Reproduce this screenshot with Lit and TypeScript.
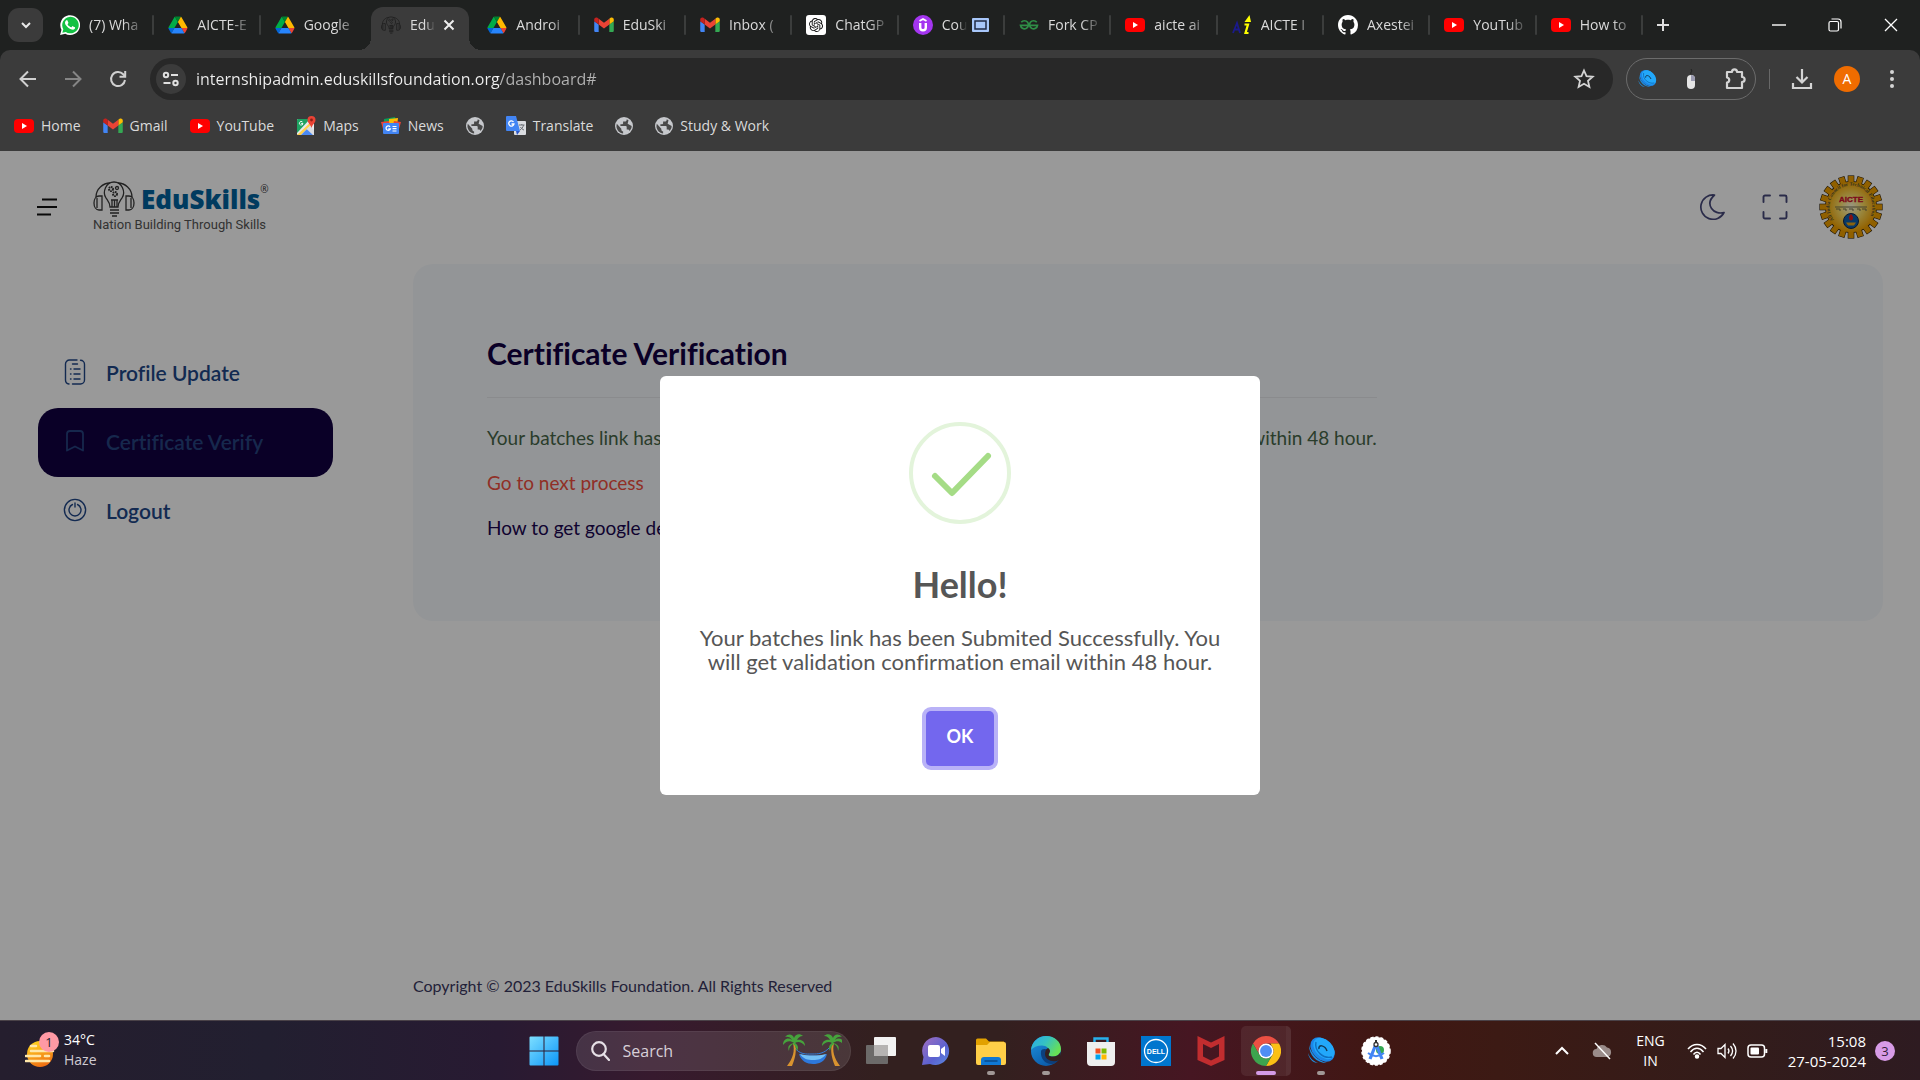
import { LitElement, html, css, svg, TemplateResult } from "lit";
import { customElement } from "lit/decorators.js";
import { classMap } from "lit/directives/class-map.js";

type Icon = TemplateResult;

/* ---------- Site icons ---------- */

const youtube: Icon = html`<svg class="ico" viewBox="0 0 20 20" aria-hidden="true">
  <rect x="0" y="3" width="20" height="14" rx="4" fill="#f00" />
  <path d="M8 7l5 3-5 3z" fill="#fff" />
</svg>`;

const gmail: Icon = html`<svg class="ico" viewBox="51 31 90 90" aria-hidden="true">
  <path fill="#4285f4" d="M58 108h14V74L52 59v43c0 3.32 2.69 6 6 6" />
  <path fill="#34a853" d="M120 108h14c3.32 0 6-2.69 6-6V59l-20 15" />
  <path fill="#fbbc04" d="M120 48v26l20-15v-8c0-7.42-8.47-11.65-14.4-7.2" />
  <path fill="#ea4335" d="M72 74V48l24 18 24-18v26L96 92" />
  <path fill="#c5221f" d="M52 51v8l20 15V48l-5.6-4.2c-5.94-4.45-14.4-.22-14.4 7.2" />
</svg>`;

const drive: Icon = html`<svg class="ico" viewBox="-2 -6 92 90" aria-hidden="true">
  <path fill="#0066da" d="m6.6 66.85 3.85 6.65c.8 1.4 1.95 2.5 3.3 3.3l13.75-23.8h-27.5c0 1.55.4 3.1 1.2 4.5z" />
  <path fill="#00ac47" d="m43.65 25-13.75-23.8c-1.35.8-2.5 1.9-3.3 3.3l-25.4 44a9.06 9.06 0 0 0-1.2 4.5h27.5z" />
  <path fill="#ea4335" d="m73.55 76.8c1.35-.8 2.5-1.9 3.3-3.3l1.6-2.75 7.65-13.25c.8-1.4 1.2-2.95 1.2-4.5h-27.502l5.852 11.5z" />
  <path fill="#00832d" d="m43.65 25 13.75-23.8c-1.35-.8-2.9-1.2-4.5-1.2h-18.5c-1.6 0-3.15.45-4.5 1.2z" />
  <path fill="#2684fc" d="m59.8 53h-32.3l-13.75 23.8c1.35.8 2.9 1.2 4.5 1.2h50.8c1.6 0 3.15-.45 4.5-1.2z" />
  <path fill="#ffba00" d="m73.4 26.5-12.7-22c-.8-1.4-1.95-2.5-3.3-3.3l-13.75 23.8 16.15 28h27.45c0-1.55-.4-3.1-1.2-4.5z" />
</svg>`;

const whatsapp: Icon = html`<svg class="ico" viewBox="0 0 24 24" aria-hidden="true">
  <path fill="#fff" d="M.1 24l1.7-6.2A11.9 11.9 0 1 1 6.3 22.400z" />
  <path fill="#12c143" d="M2.800 21.300l1.200-4.200A9.900 9.900 0 1 1 7 20.300z" />
  <path fill="#fff" d="M17.472 14.382c-.297-.149-1.758-.867-2.03-.967-.273-.099-.471-.148-.67.15-.197.297-.767.966-.94 1.164-.173.199-.347.223-.644.075-.297-.15-1.255-.463-2.39-1.475-.883-.788-1.48-1.761-1.653-2.059-.173-.297-.018-.458.13-.606.134-.133.298-.347.446-.52.149-.174.198-.298.298-.497.099-.198.05-.371-.025-.52-.075-.149-.669-1.612-.916-2.207-.242-.579-.487-.5-.669-.51-.173-.008-.371-.01-.57-.01-.198 0-.52.074-.792.372-.272.297-1.04 1.016-1.04 2.479 0 1.462 1.065 2.875 1.213 3.074.149.198 2.096 3.2 5.077 4.487.709.306 1.262.489 1.694.625.712.227 1.36.195 1.871.118.571-.085 1.758-.719 2.006-1.413.248-.694.248-1.289.173-1.413-.074-.124-.272-.198-.57-.347" />
</svg>`;

const chatgpt: Icon = html`<svg class="ico" viewBox="0 0 40 40" aria-hidden="true">
  <rect width="40" height="40" rx="6" fill="#fff" />
  <path transform="translate(6 6) scale(1.170)" fill="#111" d="M22.2819 9.8211a5.9847 5.9847 0 0 0-.5157-4.9108 6.0462 6.0462 0 0 0-6.5098-2.9A6.0651 6.0651 0 0 0 4.9807 4.1818a5.9847 5.9847 0 0 0-3.9977 2.9 6.0462 6.0462 0 0 0 .7427 7.0966 5.98 5.98 0 0 0 .511 4.9107 6.051 6.051 0 0 0 6.5146 2.9001A5.9847 5.9847 0 0 0 13.2599 24a6.0557 6.0557 0 0 0 5.7718-4.2058 5.9894 5.9894 0 0 0 3.9977-2.9001 6.0557 6.0557 0 0 0-.7475-7.0729zm-9.022 12.6081a4.4755 4.4755 0 0 1-2.8764-1.0408l.1419-.0804 4.7783-2.7582a.7948.7948 0 0 0 .3927-.6813v-6.7369l2.02 1.1686a.071.071 0 0 1 .038.052v5.5826a4.504 4.504 0 0 1-4.4945 4.4944zm-9.6607-4.1254a4.4708 4.4708 0 0 1-.5346-3.0137l.142.0852 4.783 2.7582a.7712.7712 0 0 0 .7806 0l5.8428-3.3685v2.3324a.0804.0804 0 0 1-.0332.0615L9.74 19.9502a4.4992 4.4992 0 0 1-6.1408-1.6464zM2.3408 7.8956a4.485 4.485 0 0 1 2.3655-1.9728V11.6a.7664.7664 0 0 0 .3879.6765l5.8144 3.3543-2.0201 1.1685a.0757.0757 0 0 1-.071 0l-4.8303-2.7865A4.504 4.504 0 0 1 2.3408 7.872zm16.5963 3.8558L13.1038 8.364 15.1192 7.2a.0757.0757 0 0 1 .071 0l4.8303 2.7913a4.4944 4.4944 0 0 1-.6765 8.1042v-5.6772a.79.79 0 0 0-.407-.667zm2.0107-3.0231l-.142-.0852-4.7735-2.7818a.7759.7759 0 0 0-.7854 0L9.409 9.2297V6.8974a.0662.0662 0 0 1 .0284-.0615l4.8303-2.7866a4.4992 4.4992 0 0 1 6.6802 4.66zM8.3065 12.863l-2.02-1.1638a.0804.0804 0 0 1-.038-.0567V6.0742a4.4992 4.4992 0 0 1 7.3757-3.4537l-.142.0805L8.704 5.459a.7948.7948 0 0 0-.3927.6813zm1.0976-2.3654l2.602-1.4998 2.6069 1.4998v2.9994l-2.5974 1.4997-2.6067-1.4997Z" />
</svg>`;

const udemy: Icon = html`<svg class="ico" viewBox="0 0 20 20" aria-hidden="true">
  <circle cx="10" cy="10" r="10" fill="#a435f0" />
  <path d="M6.500 6l3.500-2 3.500 2" fill="none" stroke="#fff" stroke-width="1.800" />
  <path d="M7.200 8v4.500a2.800 2.800 0 0 0 5.600 0V8" fill="none" stroke="#fff" stroke-width="2.400" />
</svg>`;

const geeks: Icon = html`<svg class="ico" viewBox="0 0 20 20" aria-hidden="true">
  <g fill="none" stroke="#2f8d46" stroke-width="1.700">
    <path d="M2.300 7.300A4 4 0 1 1 1.500 10.300H18.500A4 4 0 1 1 17.700 7.300" />
  </g>
</svg>`;

const aicteSmall: Icon = html`<svg class="ico" viewBox="0 0 20 20" aria-hidden="true">
  <path d="M1 18L5 8l3 10M2.500 14.500h4.500" fill="none" stroke="#1a1a8c" stroke-width="1.800" />
  <path d="M12.500 7L17.500 0l1.500 7z" fill="#ff0" />
  <path d="M12.500 9.500h3.500L13.500 18h3" fill="none" stroke="#ff0" stroke-width="2.200" />
</svg>`;

const github: Icon = html`<svg class="ico" viewBox="0 0 16 16" aria-hidden="true">
  <path fill="#fff" d="M8 0C3.580 0 0 3.580 0 8c0 3.540 2.290 6.530 5.470 7.590.4.070.55-.17.55-.38 0-.19-.01-.82-.01-1.490-2.010.37-2.530-.49-2.690-.94-.09-.23-.48-.94-.82-1.130-.28-.15-.68-.52-.01-.53.63-.01 1.080.58 1.230.82.72 1.210 1.870.87 2.330.66.07-.52.28-.87.51-1.070-1.780-.2-3.640-.89-3.640-3.950 0-.87.31-1.590.82-2.150-.08-.2-.36-1.020.08-2.120 0 0 .67-.21 2.200.82.64-.18 1.320-.27 2-.27s1.360.09 2 .27c1.530-1.040 2.200-.82 2.200-.82.44 1.100.16 1.920.08 2.120.51.56.82 1.270.82 2.150 0 3.070-1.870 3.750-3.650 3.950.29.25.54.73.54 1.480 0 1.070-.01 1.930-.01 2.200 0 .21.15.46.55.38A8.010 8.010 0 0 0 16 8c0-4.420-3.580-8-8-8z" />
</svg>`;

const bulbArt = svg`
  <path d="M13 17c-4-6 0-16 8-16s12 10 8 16c-2 3-4 5-4 9h-8c0-4-2-6-4-9z" />
  <path d="M3 16C3 8 10 2 17 2M39 16C39 8 32 2 25 2" />
  <path d="M6 15h3v14H6c-3 0-5-3-5-7s2-7 5-7zM36 15h-3v14h3c3 0 5-3 5-7s-2-7-5-7zM4 17v10M38 17v10" />
  <path d="M17 29h9M17 32h9M19 35h5M19 26v-7M24 26v-7M21.500 26v-7M18 19h7" />
  <circle cx="18" cy="8" r="2" stroke-width="2" stroke-dasharray="1.500 .6" />
  <circle cx="24" cy="7" r="1.500" />
  <circle cx="22" cy="13" r="2" stroke-width="2" stroke-dasharray="1.500 .6" />`;

const eduFav: Icon = html`<svg class="ico" viewBox="0 -3 42 42" fill="none" stroke="#222" stroke-width="2" aria-hidden="true">${bulbArt}</svg>`;

const globe: Icon = html`<svg class="ico globe" viewBox="2 2 20 20" aria-hidden="true">
  <circle cx="12" cy="12" r="10" fill="#c6c8cc" />
  <path fill="#3b3b3b" d="M4 9.500L9 15v1c0 1.100.9 2 2 2v2.300C7 20 3.600 16.500 3.600 12zM18 17.500c-.3-.9-1-1.500-2-1.500h-1v-3c0-.6-.4-1-1-1H8v-2h2c.6 0 1-.4 1-1V7h2c1.100 0 2-.9 2-2v-.6l2 1.200-1 4 4.500 2.400c0 2.100-.8 4-2.500 5.500z" opacity=".9" />
</svg>`;

const maps: Icon = html`<svg class="ico" viewBox="0 0 20 20" aria-hidden="true">
  <path d="M2 3h15a1 1 0 0 1 1 1v14a1 1 0 0 1-1 1H2a1 1 0 0 1-1-1V4a1 1 0 0 1 1-1z" fill="#e8eaed" />
  <path d="M1 4a1 1 0 0 1 1-1h12L1 17z" fill="#1ea362" />
  <path d="M1 19L18 3v3L5 19z" fill="#ffd04b" />
  <path d="M5 19l6.500-6.500L17.500 19z" fill="#4a89f3" />
  <path d="M10.500 13l6.500 6h1v-5l-4-4z" fill="#dadce0" />
  <path d="M15.500 0A4 4 0 0 1 19.500 4c0 3-3 4-4 8-1-4-4-5-4-8a4 4 0 0 1 4-4z" fill="#ea4335" />
  <circle cx="15.500" cy="4" r="1.400" fill="#8c1f17" />
  <path d="M6.500 6a1.800 1.800 0 1 0 .5 1.500H5.200" fill="none" stroke="#fff" stroke-width=".9" />
</svg>`;

const news: Icon = html`<svg class="ico" viewBox="0 0 20 20" aria-hidden="true">
  <path d="M3 3l11-2 2 8H3z" fill="#0c9d58" />
  <path d="M8 3l9-1-1 8H8z" fill="#fbbc04" />
  <path d="M0 6l8-1 1 8H2zM20 6l-7-1-2 8h7z" fill="#ea4335" />
  <rect x="2" y="7" width="16" height="11" rx="1" fill="#4285f4" />
  <path d="M9 10.800a2.200 2.200 0 1 0 .3 2.200H7.300" fill="none" stroke="#fff" stroke-width="1.300" />
  <path d="M11.500 10.500h4M11.500 12.700h4M11.500 15h4" stroke="#fff" stroke-width="1.200" />
</svg>`;

const translate: Icon = html`<svg class="ico" viewBox="0 0 20 20" aria-hidden="true">
  <rect x="8" y="5" width="12" height="14" rx="1" fill="#dadce0" />
  <path d="M1 0h9l4 15H1a1 1 0 0 1-1-1V1a1 1 0 0 1 1-1z" fill="#4285f4" />
  <path d="M10 15h4l-3 4z" fill="#2a56c6" />
  <path d="M7.500 6a2.600 2.600 0 1 0 .4 2H5.500" fill="none" stroke="#fff" stroke-width="1.300" />
  <path d="M13 9h5.500M15.800 8v1M17.500 9c-.5 2.500-2 4-3.500 5M14.500 11c.8 1.500 2 2.500 3.500 3" fill="none" stroke="#6b6f75" />
</svg>`;

const swirl: Icon = html`<svg class="ico" viewBox="0 0 30 30" aria-hidden="true">
  <path d="M3 9c0 10 7 18 18 18-9-2-16-9-18-18zM2 17c1 6 5 10 10 10-5-2-8-5-10-10z" fill="#1e8fe0" />
  <ellipse cx="16.500" cy="13.500" rx="14" ry="10" transform="rotate(45 16.500 13.500)" fill="#1b86e8" />
  <ellipse cx="18" cy="12.500" rx="12.500" ry="8.500" transform="rotate(45 18 12.500)" fill="#22a8fb" />
  <path d="M10 6c-2 9 7 17 16 15" fill="none" stroke="#0f6fc0" stroke-width="1.400" />
  <path d="M13 13c-1-5 6-4 8 2" fill="none" stroke="#123a58" stroke-width="1.500" />
</svg>`;

/* ---------- Browser window ---------- */

interface Tab { icon: Icon; title: string; active?: boolean; pip?: boolean }

const TABS: Tab[] = [
  { icon: whatsapp, title: "(7) Wha" },
  { icon: drive, title: "AICTE-E" },
  { icon: drive, title: "Google" },
  { icon: eduFav, title: "Edu", active: true },
  { icon: drive, title: "Androi" },
  { icon: gmail, title: "EduSki" },
  { icon: gmail, title: "Inbox (" },
  { icon: chatgpt, title: "ChatGP" },
  { icon: udemy, title: "Cou", pip: true },
  { icon: geeks, title: "Fork CP" },
  { icon: youtube, title: "aicte ai" },
  { icon: aicteSmall, title: "AICTE I" },
  { icon: github, title: "Axestei" },
  { icon: youtube, title: "YouTub" },
  { icon: youtube, title: "How to" },
];

const BOOKMARKS: { icon: Icon; label: string }[] = [
  { icon: youtube, label: "Home" },
  { icon: gmail, label: "Gmail" },
  { icon: youtube, label: "YouTube" },
  { icon: maps, label: "Maps" },
  { icon: news, label: "News" },
  { icon: globe, label: "" },
  { icon: translate, label: "Translate" },
  { icon: globe, label: "" },
  { icon: globe, label: "Study & Work" },
];

@customElement("browser-bar")
class BrowserBar extends LitElement {
  static styles = css`
    :host { display: block; background: #1f2120; color: #dadada; font: 14px/20px "Open Sans", "Noto Sans", sans-serif; }
    button { background: none; border: 0; padding: 0; margin: 0; font: inherit; color: inherit; display: grid; place-items: center; }
    a { color: inherit; text-decoration: none; }
    .ico { width: 20px; height: 20px; flex: none; display: block; }
    .strip { display: flex; height: 50px; align-items: center; }
    .search-tabs { width: 35px; height: 34px; margin: 0 5px 0 8px; border-radius: 11px; background: #3b3b3b; flex: none; }
    .tabs { flex: 1; min-width: 0; display: grid; grid-auto-flow: column; grid-auto-columns: minmax(0, 1fr); align-self: stretch; }
    .tab { position: relative; display: flex; align-items: center; padding-left: 14px; min-width: 0; }
    .tab:first-child { padding-left: 12px; }
    .open { flex: 1; min-width: 0; display: flex; gap: 9px; align-items: center; text-align: left; }
    .title { flex: 1; min-width: 0; overflow: hidden; white-space: nowrap;
      -webkit-mask-image: linear-gradient(90deg, #000 60%, transparent 100%); mask-image: linear-gradient(90deg, #000 60%, transparent 100%); }
    .sep { width: 2px; height: 20px; background: #3b3d3c; border-radius: 1px; margin-left: 6px; flex: none; }
    .tab.bare .sep { background: none; }
    .pip { margin-left: 5px; margin-right: 8px; flex: none; width: 17px; height: 14px; }
    .tab.active::before { content: ""; position: absolute; inset: 7px 4px 0 4px; background: #3b3b3b; border-radius: 12px 12px 0 0; }
    .tab.active::after { content: ""; position: absolute; bottom: 0; left: -8px; right: -8px; height: 12px;
      background: radial-gradient(circle at 0 0, transparent 12px, #3b3b3b 12px) left / 12px 12px no-repeat,
        radial-gradient(circle at 100% 0, transparent 12px, #3b3b3b 12px) right / 12px 12px no-repeat; }
    .tab.active > * { position: relative; z-index: 1; }
    .tab.active .sep { margin-left: 16px; }
    .close { width: 12px; height: 12px; margin-left: 8px; flex: none; color: #eee; }
    .window { display: flex; width: 277px; flex: none; align-items: center; }
    .new-tab { width: 40px; height: 34px; }
    .controls { margin-left: auto; display: flex; gap: 28px; padding-right: 15px; }
    .controls button { width: 28px; height: 28px; color: #fff; }
    .toolbar { background: #3b3b3b; border-radius: 10px 10px 0 0; padding: 8px 14px 0; }
    .row { display: flex; align-items: center; height: 42px; }
    .nav { display: flex; gap: 17px; margin-right: 18px; }
    .nav button { width: 28px; height: 28px; color: #d0d0d0; }
    .nav .off { color: #858585; }
    .nav svg { width: 20px; height: 20px; }
    .omnibox { flex: 1; min-width: 0; height: 42px; border-radius: 21px; background: #282828; display: flex; align-items: center; padding: 0 18px 0 6px; }
    .site { width: 30px; height: 30px; border-radius: 50%; background: #3b3b3b; flex: none; }
    .url { flex: 1; min-width: 0; border: 0; outline: 0; margin: 0 10px; padding: 0; height: 30px; font: 16px/30px "Open Sans", "Noto Sans", sans-serif;
      background: linear-gradient(90deg, #f0f0f0 304px, #b4b4b4 304px); -webkit-background-clip: text; background-clip: text; -webkit-text-fill-color: transparent; }
    .ext { display: flex; align-items: center; gap: 20px; height: 40px; border: 1px solid #6c6c6c; border-radius: 21px; padding: 0 8px; margin-left: 13px; }
    .ext button { width: 24px; height: 24px; }
    .rule { width: 1px; height: 20px; background: #686868; margin: 0 21px 0 13px; }
    .end { display: flex; align-items: center; }
    .avatar { width: 26px; height: 26px; border-radius: 50%; background: #ef6c00; color: #fff; margin: 0 28px 0 21px; }
    .more { width: 8px; height: 24px; margin-right: 10px; }
    .bookmarks { display: flex; align-items: center; height: 51px; gap: 22px; }
    .bookmarks a { display: flex; align-items: center; gap: 7px; }
    .globe { width: 18px; height: 18px; }
  `;

  render() {
    return html`
      <div class="strip">
        <button class="search-tabs" aria-label="Search tabs">
          <svg width="12" height="8" viewBox="0 0 12 8"><path d="M2 2l4 4 4-4" fill="none" stroke="#e8e8e8" stroke-width="2" /></svg>
        </button>
        <nav class="tabs" aria-label="Tabs">
          ${TABS.map((t, i) => html`
            <div class=${classMap({ tab: true, active: !!t.active, bare: i === 2 || !!t.active })}>
              <button class="open">${t.icon}<span class="title">${t.title}</span></button>
              ${t.pip ? html`<svg class="pip" viewBox="0 0 17 14"><rect width="17" height="14" rx="1" fill="#a8c7fa" /><rect x="3" y="3" width="11" height="8" fill="#a8c7fa" stroke="#1f2a44" stroke-width="1.500" /></svg>` : ""}
              ${t.active ? html`<button class="close" aria-label="Close tab"><svg width="12" height="12" viewBox="0 0 12 12"><path d="M1.500 1.500l9 9M10.500 1.500l-9 9" stroke="currentColor" stroke-width="2" /></svg></button>` : ""}
              <span class="sep"></span>
            </div>`)}
        </nav>
        <div class="window">
          <button class="new-tab" aria-label="New tab"><svg width="14" height="14" viewBox="0 0 14 14"><path d="M7 1v12M1 7h12" stroke="#dedede" stroke-width="2" /></svg></button>
          <div class="controls">
            <button aria-label="Minimize"><svg width="14" height="14" viewBox="0 0 14 14"><path d="M0 7h14" stroke="currentColor" stroke-width="1.400" /></svg></button>
            <button aria-label="Restore"><svg width="14" height="14" viewBox="0 0 14 14" fill="none" stroke="currentColor" stroke-width="1.200"><rect x="1" y="3.500" width="9.500" height="9.500" rx="1.500" /><path d="M3.500 1h6.500a3 3 0 0 1 3 3v6.500" /></svg></button>
            <button aria-label="Close"><svg width="14" height="14" viewBox="0 0 14 14"><path d="M1 1l12 12M13 1L1 13" stroke="currentColor" stroke-width="1.300" /></svg></button>
          </div>
        </div>
      </div>
      <div class="toolbar">
        <div class="row">
          <div class="nav">
            <button aria-label="Back"><svg viewBox="0 0 20 20" fill="none" stroke="currentColor" stroke-width="2"><path d="M18 10H3M10 2.500L2.500 10l7.500 7.500" /></svg></button>
            <button class="off" aria-label="Forward"><svg viewBox="0 0 20 20" fill="none" stroke="currentColor" stroke-width="2"><path d="M2 10h15M10 2.500l7.500 7.500-7.500 7.500" /></svg></button>
            <button aria-label="Reload"><svg viewBox="0 0 20 20" fill="none" stroke="currentColor" stroke-width="2"><path d="M17 11a7 7 0 1 1-1.800-5.700L17 7.200" /><path d="M17.200 2v5.700h-5.700" /></svg></button>
          </div>
          <div class="omnibox">
            <button class="site" aria-label="Site information"><svg width="18" height="16" viewBox="0 0 18 16" fill="none" stroke="#e0e0e0" stroke-width="2"><circle cx="4" cy="4" r="2.200" /><path d="M9 4h7" /><circle cx="13.500" cy="12" r="2.200" /><path d="M1.500 12h7" /></svg></button>
            <input class="url" aria-label="Address" value="internshipadmin.eduskillsfoundation.org/dashboard#" />
            <button aria-label="Bookmark this tab"><svg width="22" height="22" viewBox="0 0 22 22" fill="none" stroke="#d4d4d4" stroke-width="1.800"><path d="M11 2.500l2.500 5.700 6.200.6-4.700 4.100 1.400 6.100-5.400-3.200-5.400 3.200L7 12.900 2.300 8.800l6.200-.6z" /></svg></button>
          </div>
          <div class="ext">
            <button aria-label="Sound extension">${swirl}</button>
            <button aria-label="Mouse extension"><svg width="20" height="24" viewBox="0 0 20 24"><path d="M10 7c-1-2 2-2 0-5" stroke="#222" fill="none" /><rect x="6" y="8" width="8" height="14" rx="4" fill="#e6e6e6" /><path d="M10 8a4 4 0 0 1 4 4v2h-4z" fill="#9a9ab0" /></svg></button>
            <button aria-label="Extensions"><svg width="24" height="24" viewBox="0 0 24 24" fill="none" stroke="#d4d4d4" stroke-width="2.200" stroke-linejoin="round"><path d="M4 5h5c0-3.500 5-3.500 5 0h5v5c3.500 0 3.500 5 0 5v6H4v-5.500c3-.5 3-4.500 0-5z" /></svg></button>
          </div>
          <span class="rule"></span>
          <div class="end">
            <button aria-label="Downloads"><svg width="22" height="22" viewBox="0 0 22 22" fill="none" stroke="#d4d4d4" stroke-width="2.200"><path d="M11 1v13M5.500 9l5.500 5.500L16.500 9M2 15v5h18v-5" /></svg></button>
            <button class="avatar" aria-label="Profile">A</button>
            <button class="more" aria-label="More"><svg width="4" height="20" viewBox="0 0 4 20" fill="#d4d4d4"><circle cx="2" cy="3" r="2" /><circle cx="2" cy="10" r="2" /><circle cx="2" cy="17" r="2" /></svg></button>
          </div>
        </div>
        <nav class="bookmarks" aria-label="Bookmarks">
          ${BOOKMARKS.map((b) => html`<a href="#" aria-label=${b.label || "Bookmark"}>${b.icon}${b.label ? html`<span>${b.label}</span>` : ""}</a>`)}
        </nav>
      </div>
    `;
  }
}

/* ---------- Dashboard page ---------- */

const gearTeeth = Array.from({ length: 20 }, (_, i) => svg`<rect x="-2.700" y="-31" width="5.400" height="9" transform="rotate(${i * 18})" />`);

const MESSAGE = "Your batches link has been Submited Successfully. You will get validation confirmation email within 48 hour.";

const MENU: { label: string; icon: Icon; active?: boolean }[] = [
  { label: "Profile Update", icon: html`<svg width="24" height="26" viewBox="0 0 24 26" fill="none" stroke="currentColor" stroke-width="1.400" stroke-linecap="round"><path d="M14 1H6.500A4 4 0 0 0 2.500 5v16a4 4 0 0 0 3.500 4M17.500 1.200a4 4 0 0 1 4 4V21a4 4 0 0 1-4 4H9.500M9.500 5h5M11 10h6M11 15h6M11 20h6M7.500 10h.5M7.500 15h.5M7.500 20h.5" /></svg>` },
  { label: "Certificate Verify", active: true, icon: html`<svg width="24" height="26" viewBox="0 0 24 26" fill="none" stroke="currentColor" stroke-width="1.800" stroke-linejoin="round"><path d="M4 6a3 3 0 0 1 3-3h10a3 3 0 0 1 3 3v16.500l-8-4-8 4z" /></svg>` },
  { label: "Logout", icon: html`<svg width="24" height="24" viewBox="0 0 24 24" fill="none" stroke="currentColor" stroke-width="1.400" stroke-linecap="round"><circle cx="12" cy="12" r="10.600" /><path d="M9.500 6.500a6 6 0 1 0 5 0M12 5v4" /></svg>` },
];

@customElement("dashboard-page")
class DashboardPage extends LitElement {
  static styles = css`
    :host { display: flex; flex-direction: column; background: #fff; font-family: Lato, "Open Sans", sans-serif; font-variant-ligatures: none; color: #1a0550; }
    button { background: none; border: 0; padding: 0; color: inherit; display: grid; place-items: center; }
    a { color: inherit; text-decoration: none; }
    header { display: flex; align-items: center; height: 113px; padding: 0 37px 2px; box-sizing: border-box; }
    .brand { display: grid; grid-template-columns: auto auto; column-gap: 6px; margin-left: 36px; justify-content: start; align-items: center; }
    .name { font: 800 26px/30px "Open Sans", sans-serif; color: #00639f; display: flex; align-items: flex-start; }
    .reg { font: 10px/10px "Open Sans", sans-serif; color: #333; }
    .tagline { grid-column: 1 / 3; font: 13px/15px Roboto, sans-serif; color: #555; }
    .tools { margin-left: auto; display: flex; align-items: center; gap: 37px; color: #47497a; }
    .avatar { margin-left: -6px; }
    .avatar svg { display: block; }
    .body { flex: 1; display: grid; grid-template-columns: 295px minmax(0, 1fr); column-gap: 80px; padding: 0 37px 0 38px; }
    .menu { padding-top: 75px; display: flex; flex-direction: column; }
    .menu a { height: 69px; box-sizing: border-box; border-radius: 20px; display: flex; align-items: center; gap: 19px; padding: 0 0 3px 25px; font-size: 21px; font-weight: 600; color: #214788; }
    .menu a.active { background: #120041; color: #264480; }
    .menu svg { flex: none; }
    main { display: flex; flex-direction: column; }
    .card { background: #f6f9fc; border-radius: 20px; padding: 65px 74px 71px; }
    .inner { width: fit-content; }
    h1 { margin: 0; font-size: 30px; line-height: 48px; font-weight: 700; padding-bottom: 20px; border-bottom: 1px solid #e6e8eb; color: #120041; }
    .lines { margin: 0; padding-top: 17px; font-size: 19px; line-height: 45px; }
    .lines p { margin: 0; }
    .ok { color: #476648; }
    .next { color: #f04f40; }
    footer { margin-top: auto; font-size: 16px; line-height: 20px; padding-bottom: 24px; color: #3a3860; }
  `;

  render() {
    return html`
      <header>
        <button aria-label="Toggle menu"><svg width="20" height="18" viewBox="0 0 20 18"><path d="M5 1.500h15M0 9h20M0 16.500h14" stroke="#111" stroke-width="2" /></svg></button>
        <a class="brand" href="#">
          <svg width="42" height="36" viewBox="0 0 42 36" fill="none" stroke="#3a3a3a" stroke-width="1.300" aria-hidden="true">${bulbArt}</svg>
          <span class="name">EduSkills<span class="reg">®</span></span>
          <span class="tagline">Nation Building Through Skills</span>
        </a>
        <div class="tools">
          <button aria-label="Dark mode"><svg width="26" height="26" viewBox="0 0 26 26" fill="none" stroke="currentColor" stroke-width="1.700" stroke-linejoin="round"><path d="M15.500 1A12.200 12.200 0 1 0 25 18.500C15 21.500 5 10.500 15.500 1z" /></svg></button>
          <button aria-label="Full screen"><svg width="26" height="26" viewBox="0 0 26 26" fill="none" stroke="currentColor" stroke-width="1.900" stroke-linecap="round"><path d="M1.500 8V3a1.500 1.500 0 0 1 1.500-1.500H8M18 1.500h5A1.500 1.500 0 0 1 24.500 3v5M24.500 18v5a1.500 1.500 0 0 1-1.500 1.500h-5M8 24.500H3A1.500 1.500 0 0 1 1.500 23v-5" /></svg></button>
          <button class="avatar" aria-label="Account">
            <svg width="64" height="64" viewBox="-32 -32 64 64">
              <defs><radialGradient id="gold"><stop offset="0" stop-color="#fffbe0" /><stop offset=".45" stop-color="#ffe26a" /><stop offset="1" stop-color="#f5a300" /></radialGradient>
                <path id="arc" d="M-17 13A21.400 21.400 0 1 1 17 13" /></defs>
              <g fill="#f0a000" stroke="#33240a" stroke-width="1.200">${gearTeeth}</g>
              <circle r="26" fill="#33240a" />
              <g fill="#f0a000">${gearTeeth}</g>
              <circle r="25.200" fill="url(#gold)" />
              <text font-family="Liberation Serif" font-size="5" font-weight="700" fill="#5a5230"><textPath href="#arc">All India Council for Technical Education</textPath></text>
              <text y="-5" text-anchor="middle" font-family="Liberation Sans" font-size="8" font-weight="700" fill="#d0102a" stroke="#d0102a" stroke-width=".4">AICTE</text>
              <path d="M-16 0h32M-15 2h4v2M-8 2h3v2M-2 2h4v2M6 2h3v2M11 2h4v2" fill="none" stroke="#77704a" stroke-width="1" />
              <circle cy="14" r="7.500" fill="#0b5fae" stroke="#12294e" />
              <path d="M0 7c3 3 2.500 6 0 6.500C-2.500 13 -3 10 0 7z" fill="#e01c1c" />
              <path d="M-5 15.500h10l-2 3h-6z" fill="#e6a51a" />
            </svg>
          </button>
        </div>
      </header>
      <div class="body">
        <nav class="menu" aria-label="Main">
          ${MENU.map((m) => html`<a href="#" class=${classMap({ active: !!m.active })}>${m.icon}<span>${m.label}</span></a>`)}
        </nav>
        <main>
          <section class="card">
            <div class="inner">
              <h1>Certificate Verification</h1>
              <div class="lines">
                <p class="ok">${MESSAGE}</p>
                <p><a class="next" href="#">Go to next process</a></p>
                <p><a href="#">How to get google developer profile link</a></p>
              </div>
            </div>
          </section>
          <footer>Copyright © 2023 EduSkills Foundation. All Rights Reserved</footer>
        </main>
      </div>
    `;
  }
}

@customElement("success-dialog")
class SuccessDialog extends LitElement {
  static styles = css`
    :host { display: flex; align-items: center; justify-content: center; background: rgba(0, 0, 0, 0.4); font-family: Lato, "Open Sans", sans-serif; font-variant-ligatures: none; color: #565656; }
    .box { width: 600px; max-width: 90%; background: #fff; border-radius: 6px; padding: 46px 32px 29px; box-sizing: border-box; display: flex; flex-direction: column; align-items: center; text-align: center; }
    .mark { display: block; margin-bottom: 39px; }
    h2 { margin: 0 0 21px; font-size: 36px; line-height: 42px; font-weight: 700; }
    p { margin: 0 0 37px; font-size: 22px; line-height: 24px; }
    button { width: 68px; height: 55px; border: 0; border-radius: 5px; background: #7367ee; color: #fff; font: 700 18px/24px Lato, sans-serif; padding: 0 0 5px; box-shadow: 0 0 0 4px #b9b2f7; }
  `;

  render() {
    return html`
      <div class="box" role="dialog" aria-modal="true" aria-labelledby="title">
        <svg class="mark" width="102" height="102" viewBox="0 0 102 102" fill="none" aria-hidden="true">
          <circle cx="51" cy="51" r="49" stroke="#e3f4db" stroke-width="4" />
          <path d="M26 54l17 17 36-37" stroke="#a5dc86" stroke-width="6" stroke-linecap="round" stroke-linejoin="round" />
        </svg>
        <h2 id="title">Hello!</h2>
        <p>${MESSAGE}</p>
        <button>OK</button>
      </div>
    `;
  }
}

/* ---------- Taskbar ---------- */

const palm = (x: number, flip: number) => svg`<g transform="translate(${x} 0) scale(${flip} 1)">
  <path d="M-1 9c2 8 0 15-6 23h5c3-7 5-15 3-23z" fill="#d9932f" />
  <path d="M0 9c-4-3-8-2-11 2 0-6 5-8 9-5-1-3-5-4-7-3 3-4 8-3 9 1 1-4 6-5 9-2-3 0-5 2-6 4 4-1 8 1 8 6-3-4-7-5-10-3 3 2 4 5 2 8-1-4-2-6-4-7-2 1-4 3-4 7-2-4 0-7 5-8z" fill="#46a33c" />
</g>`;

const APPS: { name: string; icon: Icon; state?: "running" | "current" }[] = [
  { name: "Task view", icon: html`<svg viewBox="0 0 30 30"><rect x="0" y="9" width="22" height="19" rx="1" fill="#6c6a69" /><rect x="8" y="1" width="22" height="19" rx="1" fill="#f2f2f2" /><path d="M8 9h14v11H8z" fill="#b5b3b2" /></svg>` },
  { name: "Chat", icon: html`<svg viewBox="0 0 30 30"><defs><linearGradient id="chat" x1="0" y1="0" x2="1" y2="1"><stop offset="0" stop-color="#a36fc0" /><stop offset=".6" stop-color="#5b62d0" /><stop offset="1" stop-color="#5a8be0" /></linearGradient></defs><path d="M15 1a14 14 0 1 1-6 27l-8 1 1.500-8A14 14 0 0 1 15 1z" fill="url(#chat)" /><rect x="7" y="9" width="12" height="12" rx="2" fill="#fff" /><path d="M20 13l4-3v10l-4-3z" fill="#fff" /></svg>` },
  { name: "File Explorer", state: "running", icon: html`<svg viewBox="0 0 30 30"><path d="M0 4a1.500 1.500 0 0 1 1.500-1.500H10l3 3H28v6H0z" fill="#e2a100" /><path d="M0 9h11l3-3h14a2 2 0 0 1 2 2v19a2 2 0 0 1-2 2H2a2 2 0 0 1-2-2z" fill="#ffcf48" /><path d="M5 29v-5a3 3 0 0 1 3-3h14a3 3 0 0 1 3 3v5z" fill="#0f78d4" /><path d="M8.500 25h13" stroke="#0a4a8a" stroke-width="1.500" /></svg>` },
  { name: "Edge", state: "running", icon: html`<svg viewBox="0 0 30 30"><defs><linearGradient id="e1" x1="0" y1="0" x2="1" y2=".5"><stop offset="0" stop-color="#2aa8e8" /><stop offset=".5" stop-color="#35c1c4" /><stop offset="1" stop-color="#67e055" /></linearGradient><linearGradient id="e2" x1="0" y1="0" x2=".6" y2="1"><stop offset="0" stop-color="#1f94e0" /><stop offset="1" stop-color="#0b5aa8" /></linearGradient></defs><circle cx="15" cy="15" r="15" fill="url(#e2)" /><path d="M0 14C1 5 8 0 15 0c9 0 15 6 15 13 0 5-4 7.500-8 7.500-4 0-5-1.500-4-3 2-5-3-8-7-8-5 0-9 2-11 4.500z" fill="url(#e1)" /><path d="M10 15c-1 8 5 14 12 13 3-1 5-3 6.500-5-6 3-14 0-14-6 0-2 1-3 2-3-2-2-6-1-6.500 1z" fill="#0c3f7c" /><path d="M17 12c3 2 2 4 1 6-1 1.500 0 2.500 4 2.500 3 0 6-1.500 7.500-4.500l.5 5-2 3c-6 3-14 0-14-6 0-3 1-5 3-6z" fill="#33201f" /></svg>` },
  { name: "Microsoft Store", icon: html`<svg viewBox="0 0 30 30"><path d="M8.500 8V2.500h13V8" fill="none" stroke="#27b1ec" stroke-width="2.400" /><path d="M1 6h28v20a4 4 0 0 1-4 4H5a4 4 0 0 1-4-4z" fill="#efefef" /><path fill="#f25022" d="M9.500 12.500h5v5h-5z" /><path fill="#7fba00" d="M15.500 12.500h5v5h-5z" /><path fill="#00a4ef" d="M9.500 18.500h5v5h-5z" /><path fill="#ffb900" d="M15.500 18.500h5v5h-5z" /></svg>` },
  { name: "Dell", icon: html`<svg viewBox="0 0 30 30"><path fill="#0076ce" d="M0 0h30v30H0z" /><circle cx="15" cy="15" r="11.500" fill="none" stroke="#fff" stroke-width="1.300" /><text x="15" y="17.500" text-anchor="middle" font-family="Liberation Sans" font-weight="700" font-size="7" fill="#fff">DELL</text></svg>` },
  { name: "McAfee", icon: html`<svg viewBox="0 0 30 30"><path fill="#c12d2f" d="M1.500 0L15 6.500 28.500 0v24L15 30 1.500 24zM7 8v12.500l8 4 8-4V8l-8 4z" /></svg>` },
  { name: "Chrome", state: "current", icon: html`<svg viewBox="0 0 48 48"><path fill="#ea4335" d="M24 0a24 24 0 0 1 20.800 12H24a12 12 0 0 0-10.400 18L3.200 12A24 24 0 0 1 24 0z" /><path fill="#fbbc04" d="M44.800 12A24 24 0 0 1 24 48l10.400-18A12 12 0 0 0 34.400 18L31 12z" /><path fill="#2f9e41" d="M3.200 12l10.400 18a12 12 0 0 0 20.800 0L24 48A24 24 0 0 1 3.200 12z" /><circle cx="24" cy="24" r="12" fill="#fff" /><circle cx="24" cy="24" r="9.500" fill="#4285f4" /></svg>` },
  { name: "Sound app", state: "running", icon: swirl },
  { name: "Android Studio", icon: html`<svg viewBox="0 0 30 30"><circle cx="15" cy="15" r="14" fill="#fff" stroke="#fff" stroke-dasharray="3 2" stroke-width="1.600" /><circle cx="19" cy="14" r="4" fill="#34a853" /><path d="M15 8L9 23M15 8l6 15" stroke="#4285f4" stroke-width="3.200" /><path d="M7 17c5 4 11 4 16 0" fill="none" stroke="#4285f4" stroke-width="2" /><path d="M15 4v4" stroke="#333" stroke-width="2" /><circle cx="15" cy="8.500" r="2" fill="#fff" stroke="#333" stroke-width="1.300" /></svg>` },
];

@customElement("task-bar")
class TaskBar extends LitElement {
  static styles = css`
    :host { display: grid; grid-template-columns: 1fr auto 1fr; align-items: center; height: 60px; box-sizing: border-box; border-top: 1px solid #4a4248; color: #fff;
      font: 14px/20px "Open Sans", "Noto Sans", sans-serif;
      background: linear-gradient(90deg, #251e2e 0%, #221f30 14%, #281a32 26%, #371a2e 34%, #33201f 46%, #33201f 52%, #461622 62%, #401713 72%, #3c1a14 78%, #331c1a 90%, #2e1b21 100%); }
    button { background: none; border: 0; padding: 0; color: inherit; font: inherit; display: grid; place-items: center; }
    svg { display: block; }
    .weather { justify-self: start; display: flex; gap: 5px; padding: 0 0 2px 25px; text-align: left; align-items: center; }
    .haze { color: #cfcbd2; display: block; }
    .center { display: flex; align-items: center; }
    .cell { position: relative; width: 55px; height: 50px; }
    .cell svg { width: 30px; height: 30px; }
    .current::before { content: ""; position: absolute; inset: 0 3px 0 2px; border-radius: 5px; background: rgba(255, 255, 255, 0.07); border-right: 5px solid rgba(255, 255, 255, 0.04); }
    .current::after, .running::after { content: ""; position: absolute; left: 50%; bottom: 1px; width: 8px; height: 4px; margin-left: -4px; border-radius: 2px; background: #a19896; }
    .current::after { width: 20px; margin-left: -10px; background: #d49be6; }
    .search { display: flex; align-items: center; width: 275px; height: 40px; box-sizing: border-box; border-radius: 20px; padding: 0 8px 0 14px; margin: 0 3px 0 4px; gap: 13px;
      background: rgba(255, 255, 255, 0.11); border: 1px solid rgba(255, 255, 255, 0.06); }
    .search input { flex: 1; min-width: 0; background: none; border: 0; outline: 0; padding: 0; color: #d8d0d8; font: 16px/24px "Open Sans", sans-serif; }
    .search input::placeholder { color: #d8d0d8; opacity: 1; }
    .tray { justify-self: end; display: flex; align-items: center; padding-right: 25px; }
    .lang { margin: 0 22px 0 24px; text-align: center; }
    .status { display: flex; gap: 10px; }
    .cloud { margin-left: 23px; }
    .clock { margin-left: 20px; text-align: right; font-size: 15px; }
    .count { width: 20px; height: 20px; border-radius: 50%; background: #d79be6; color: #33203a; margin-left: 9px; display: grid; place-items: center; font-size: 13px; line-height: 20px; }
  `;

  render() {
    return html`
      <button class="weather">
        <svg width="34" height="36" viewBox="0 0 34 36"><defs><linearGradient id="sun" x1=".3" y1="0" x2=".7" y2="1"><stop offset="0" stop-color="#ffd21f" /><stop offset="1" stop-color="#ee6a13" /></linearGradient></defs><circle cx="15" cy="22" r="13" fill="url(#sun)" /><path d="M6 14h5M6 19h22M1 24h14M20 24h4M1 29h23" stroke="#ffe7a8" stroke-width="2.600" stroke-linecap="round" /><circle cx="24" cy="10" r="10" fill="#ff99a4" /><text x="24" y="15" text-anchor="middle" font-family="Open Sans" font-size="13" fill="#221f2f">1</text></svg>
        <span>34°C<span class="haze">Haze</span></span>
      </button>
      <div class="center">
        <button class="cell" aria-label="Start"><svg viewBox="0 0 30 30"><defs><linearGradient id="win" gradientUnits="userSpaceOnUse" x1="0" y1="0" x2="30" y2="30"><stop offset="0" stop-color="#7fe0ff" /><stop offset="1" stop-color="#0a94f8" /></linearGradient></defs><path fill="url(#win)" d="M.5 1.500a1 1 0 0 1 1-1h13v14H.5zM15.500.5h13a1 1 0 0 1 1 1v13h-14zM.5 15.500h14v14h-13a1 1 0 0 1-1-1zM15.500 15.500h14v13a1 1 0 0 1-1 1h-13z" /></svg></button>
        <label class="search">
          <svg width="19" height="20" viewBox="0 0 19 20" fill="none" stroke="#e6e0e6" stroke-width="2.200"><circle cx="8" cy="8" r="6.800" /><path d="M12.500 13l5.500 6" stroke-linecap="round" /></svg>
          <input aria-label="Search" placeholder="Search" />
          <svg width="60" height="33" viewBox="0 0 60 33"><path d="M12 13c6 8 12 7 18 7s12 0 18-7" fill="none" stroke="#2f7fe0" />${palm(12, 1)}${palm(51, -1)}<path d="M17 20c8 2 20 2 28 0-2 8-8 10-14 10s-12-3-14-10z" fill="#2d78dc" /><path d="M18 20c8 2 18 2 26 0-3 5-8 6-13 6s-10-1-13-6z" fill="#74c0f4" /></svg>
        </label>
        ${APPS.map((a) => html`<button class=${classMap({ cell: true, running: a.state === "running", current: a.state === "current" })} aria-label=${a.name}>${a.icon}</button>`)}
      </div>
      <div class="tray">
        <button aria-label="Show hidden icons"><svg width="14" height="9" viewBox="0 0 14 9"><path d="M1 8l6-6 6 6" fill="none" stroke="#fff" stroke-width="2" /></svg></button>
        <svg class="cloud" width="20" height="18" viewBox="0 0 20 18"><path d="M5 15a4 4 0 0 1-.5-8A6 6 0 0 1 15 5.500a4.800 4.800 0 0 1 0 9.500z" fill="#9a8c8a" /><path d="M3 1l15 16" stroke="#fff" stroke-width="1.500" /></svg>
        <div class="lang">ENG<br />IN</div>
        <div class="status">
          <svg width="20" height="18" viewBox="0 0 20 18" fill="none" stroke="#fff" stroke-width="1.500"><path d="M1 7c5-6 13-6 18 0M3.500 10c4-5 9-5 13 0M6.500 12.500c2-3 5-3 7 0" /><circle cx="10" cy="14.500" r="1.500" fill="#fff" /></svg>
          <svg width="20" height="18" viewBox="0 0 20 18" fill="none" stroke="#fff" stroke-width="1.300"><path d="M1 6.500h3L8 2.500v13l-4-4H1zM11 6.500c1.200 1.500 1.200 3.500 0 5M13.500 4c2.500 3 2.500 7 0 10M16 1.500c4 4.500 4 10.500 0 15" /></svg>
          <svg width="21" height="18" viewBox="0 0 21 18"><rect x="1" y="3" width="16.500" height="12" rx="3" fill="none" stroke="#fff" stroke-width="1.500" /><rect x="3.500" y="5.500" width="8.500" height="7" rx="1" fill="#fff" /><path d="M19.300 7v4" stroke="#fff" stroke-width="2" /></svg>
        </div>
        <div class="clock">15:08<br />27-05-2024</div>
        <span class="count">3</span>
      </div>
    `;
  }
}

@customElement("app-root")
class AppRoot extends LitElement {
  static styles = css`
    :host { display: flex; flex-direction: column; min-height: 100vh; }
    .stage { position: relative; flex: 1; display: grid; }
    success-dialog { position: absolute; inset: 0; }
  `;

  render() {
    return html`
      <browser-bar></browser-bar>
      <div class="stage">
        <dashboard-page></dashboard-page>
        <success-dialog></success-dialog>
      </div>
      <task-bar></task-bar>
    `;
  }
}
